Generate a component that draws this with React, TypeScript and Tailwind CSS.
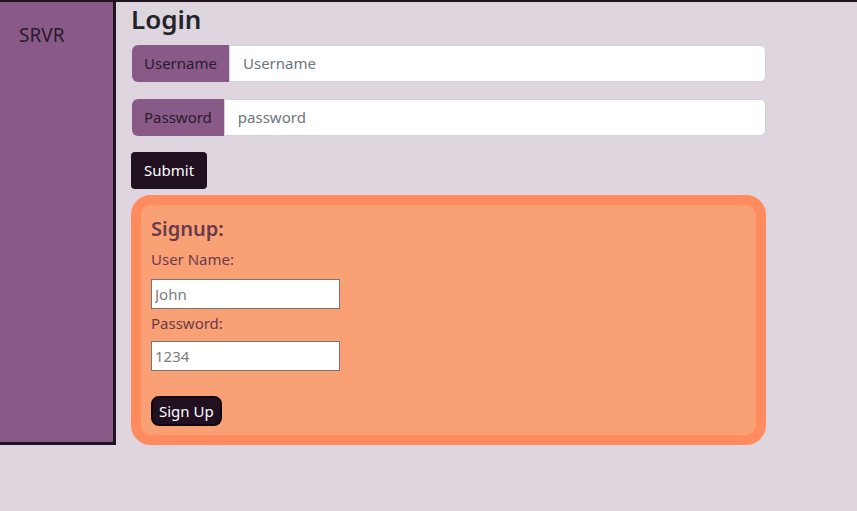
export default function App() {
  return (
    <div
      className="min-h-[511px] w-full border-t-2 border-[#1f1420] bg-[#dfd5df] text-[#212529]"
      style={{ fontFamily: '"Segoe UI", "Noto Sans", "Open Sans", sans-serif' }}
    >
      <div className="flex items-start">
        <aside className="h-[443px] w-[116px] shrink-0 border-r-[3px] border-b-[3px] border-[#1f1420] bg-[#895a87] px-[19px] pt-[19px]">
          <div className="text-[19px] leading-[28px] text-[#2a1a2c]">SRVR</div>
        </aside>

        <main className="ml-[15px] w-[635px]">
          <h1 className="mt-[2px] text-[26px] font-semibold leading-[31px] text-[#212529]">Login</h1>

          <form className="mt-[10px]">
            <div className="ml-[1px] flex h-[37px] w-[634px]">
              <span className="flex items-center rounded-l-[6px] bg-[#895a87] px-[12px] text-[15px] text-[#2a1a2c]">
                Username
              </span>
              <input
                placeholder="Username"
                className="flex-1 rounded-r-[6px] border border-[#ced4da] bg-white px-[13px] text-[15px] text-[#212529] outline-none placeholder:text-[#6c757d]"
              />
            </div>

            <div className="mt-[17px] ml-[1px] flex h-[37px] w-[634px]">
              <span className="flex items-center rounded-l-[6px] bg-[#895a87] px-[12px] text-[15px] text-[#2a1a2c]">
                Password
              </span>
              <input
                type="password"
                placeholder="password"
                className="flex-1 rounded-r-[6px] border border-[#ced4da] bg-white px-[13px] text-[15px] text-[#212529] outline-none placeholder:text-[#6c757d]"
              />
            </div>

            <button
              type="button"
              className="mt-[16px] h-[37px] rounded-[4px] bg-[#201020] px-[13px] text-[15px] text-white"
            >
              Submit
            </button>
          </form>

          <section className="mt-[6px] w-[635px] rounded-[20px] border-[10px] border-[#ff8b5f] bg-[#f9a174] px-[10px] pt-[12px] pb-[9px] text-[#6a3a4c]">
            <h2 className="text-[20px] font-semibold leading-[24px]">Signup:</h2>
            <label className="mt-[7px] block text-[15px] leading-[22px]">User Name:</label>
            <input
              placeholder="John"
              className="mt-[9px] block h-[30px] w-[189px] border border-[#767676] bg-white px-[3px] text-[15px] outline-none placeholder:text-[#7d7d7d]"
            />
            <label className="mt-[3px] block text-[15px] leading-[22px]">Password:</label>
            <input
              placeholder="1234"
              className="mt-[7px] block h-[30px] w-[189px] border border-[#767676] bg-white px-[3px] text-[15px] outline-none placeholder:text-[#7d7d7d]"
            />
            <button
              type="button"
              className="mt-[25px] h-[30px] rounded-[8px] border-2 border-[#120810] bg-[#201020] px-[6px] text-[15px] leading-none text-white"
            >
              Sign Up
            </button>
          </section>
        </main>
      </div>
    </div>
  );
}
